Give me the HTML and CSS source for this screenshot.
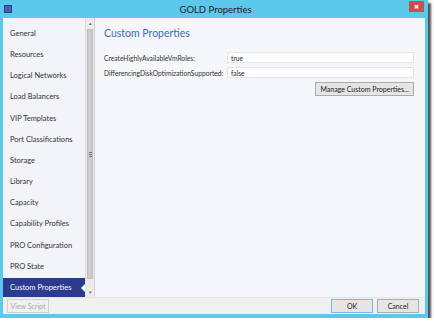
FILE: index.html
```html
<!DOCTYPE html>
<html lang="en">
<head>
    <meta charset="UTF-8">
    <title>GOLD Properties</title>
    <link rel="stylesheet" href="styles.css">
</head>
<body>

<div class="window">
    <div class="titlebar">
        <span class="app-icon"></span>
        <span class="title">GOLD Properties</span>
        <span class="close">&#x2716;</span>
    </div>
    <div class="client">
        <div class="main">
            <ul class="nav">
                <li>General</li>
                <li>Resources</li>
                <li>Logical Networks</li>
                <li>Load Balancers</li>
                <li>VIP Templates</li>
                <li>Port Classifications</li>
                <li>Storage</li>
                <li>Library</li>
                <li>Capacity</li>
                <li>Capability Profiles</li>
                <li>PRO Configuration</li>
                <li>PRO State</li>
                <li class="active">Custom Properties</li>
            </ul>
            <div class="scrollbar">
                <div class="arrow">&#x25B4;</div>
                <div class="thumb"><span class="grip"></span></div>
                <div class="arrow">&#x25BE;</div>
            </div>
            <div class="content">
                <h1>Custom Properties</h1>
                <div class="row">
                    <label>CreateHighlyAvailableVmRoles:</label>
                    <div class="field">true</div>
                </div>
                <div class="row">
                    <label>DifferencingDiskOptimizationSupported:</label>
                    <div class="field">false</div>
                </div>
                <div class="actions">
                    <button class="btn">Manage Custom Properties...</button>
                </div>
            </div>
        </div>
        <div class="footer">
            <button class="btn disabled">View Script</button>
            <div class="spacer"></div>
            <button class="btn default">OK</button>
            <button class="btn">Cancel</button>
        </div>
    </div>
</div>

</body>
</html>
```

FILE: styles.css
```css
* {
    box-sizing: border-box;
}
body {
    margin: 0;
    background-color: #fff;
    font-family: Lato, "Noto Sans", sans-serif;
    font-size: 7.5px;
    color: #333;
}

.window {
    display: flex;
    flex-direction: column;
    width: 428px;
    height: 318px;
    background-color: #5cc8ec;
    box-shadow: 3px 3px 2px rgba(40, 40, 40, .8);
}

.titlebar {
    display: flex;
    align-items: center;
    height: 18px;
    padding: 0 4px 0 4px;
}
.app-icon {
    width: 8px;
    height: 8px;
    background-color: #4a5fae;
    border: 1px solid #2c3f8a;
}
.title {
    flex: 1;
    text-align: center;
    font-size: 9.5px;
    color: #222;
    padding-left: 10px;
}
.close {
    align-self: flex-start;
    width: 15px;
    height: 11px;
    margin-top: 1px;
    background-color: #c75050;
    color: #fff;
    font-size: 6px;
    line-height: 11px;
    text-align: center;
}

.client {
    flex: 1;
    display: flex;
    flex-direction: column;
    margin: 0 3px 4px;
    background-color: #f0f0f0;
}

.main {
    flex: 1;
    display: flex;
    min-height: 0;
}

.nav {
    width: 82px;
    margin: 0;
    padding: 6px 0 0;
    list-style: none;
    background-color: #f2f4f9;
    display: flex;
    flex-direction: column;
    justify-content: space-between;
}
.nav li {
    height: 19px;
    line-height: 19px;
    padding-left: 7px;
    white-space: nowrap;
    color: #333;
}
.nav li.active {
    background-color: #2b3b8f;
    color: #fff;
    position: relative;
}
.nav li.active::after {
    content: '';
    position: absolute;
    right: 0;
    top: 6px;
    border: 4px solid transparent;
    border-right-color: #fff;
    border-left-width: 0;
}

.scrollbar {
    width: 10px;
    display: flex;
    flex-direction: column;
    background-color: #ececec;
    border-left: 1px solid #dcdcdc;
    border-right: 1px solid #d0d0d0;
}
.scrollbar .arrow {
    height: 10px;
    font-size: 5px;
    line-height: 10px;
    text-align: center;
    color: #666;
}
.scrollbar .thumb {
    flex: 1;
    margin: 1px 1px 8px;
    background-color: #cdcdcd;
    border: 1px solid #bdbdbd;
    display: flex;
    align-items: center;
    justify-content: center;
}
.scrollbar .grip {
    width: 3px;
    height: 5px;
    border-top: 1px solid #777;
    border-bottom: 1px solid #777;
    background: linear-gradient(#777, #777) center / 3px 1px no-repeat;
}

.content {
    flex: 1;
    background-color: #f5f7fa;
    padding: 9px 11px 0 9px;
}
.content h1 {
    margin: 0 0 13px;
    font-size: 10.5px;
    font-weight: normal;
    color: #3a6bc1;
}
.row {
    display: flex;
    align-items: center;
    height: 11px;
    margin-bottom: 4px;
    font-size: 6.7px;
}
.row label {
    width: 123px;
    white-space: nowrap;
}
.field {
    flex: 1;
    height: 11px;
    line-height: 10px;
    padding-left: 3px;
    background-color: #fff;
    border: 1px solid #e2e4e8;
    color: #222;
}
.actions {
    display: flex;
    justify-content: flex-end;
}

.btn {
    font-family: inherit;
    font-size: 7px;
    color: #222;
    height: 14px;
    padding: 0 4px;
    white-space: nowrap;
    background-color: #e5e5e5;
    border: 1px solid #acacac;
}
.btn.default {
    border-color: #7eb4ea;
}
.btn.disabled {
    color: #aaa;
    border-color: #cfcfcf;
    background-color: #f0f0f0;
}

.footer {
    display: flex;
    align-items: center;
    gap: 4px;
    height: 17px;
    padding: 0 6px 1px 4px;
    border-top: 1px solid #e4e4e4;
}
.footer .spacer {
    flex: 1;
}
.footer .btn {
    width: 42px;
    padding: 0;
}
```
